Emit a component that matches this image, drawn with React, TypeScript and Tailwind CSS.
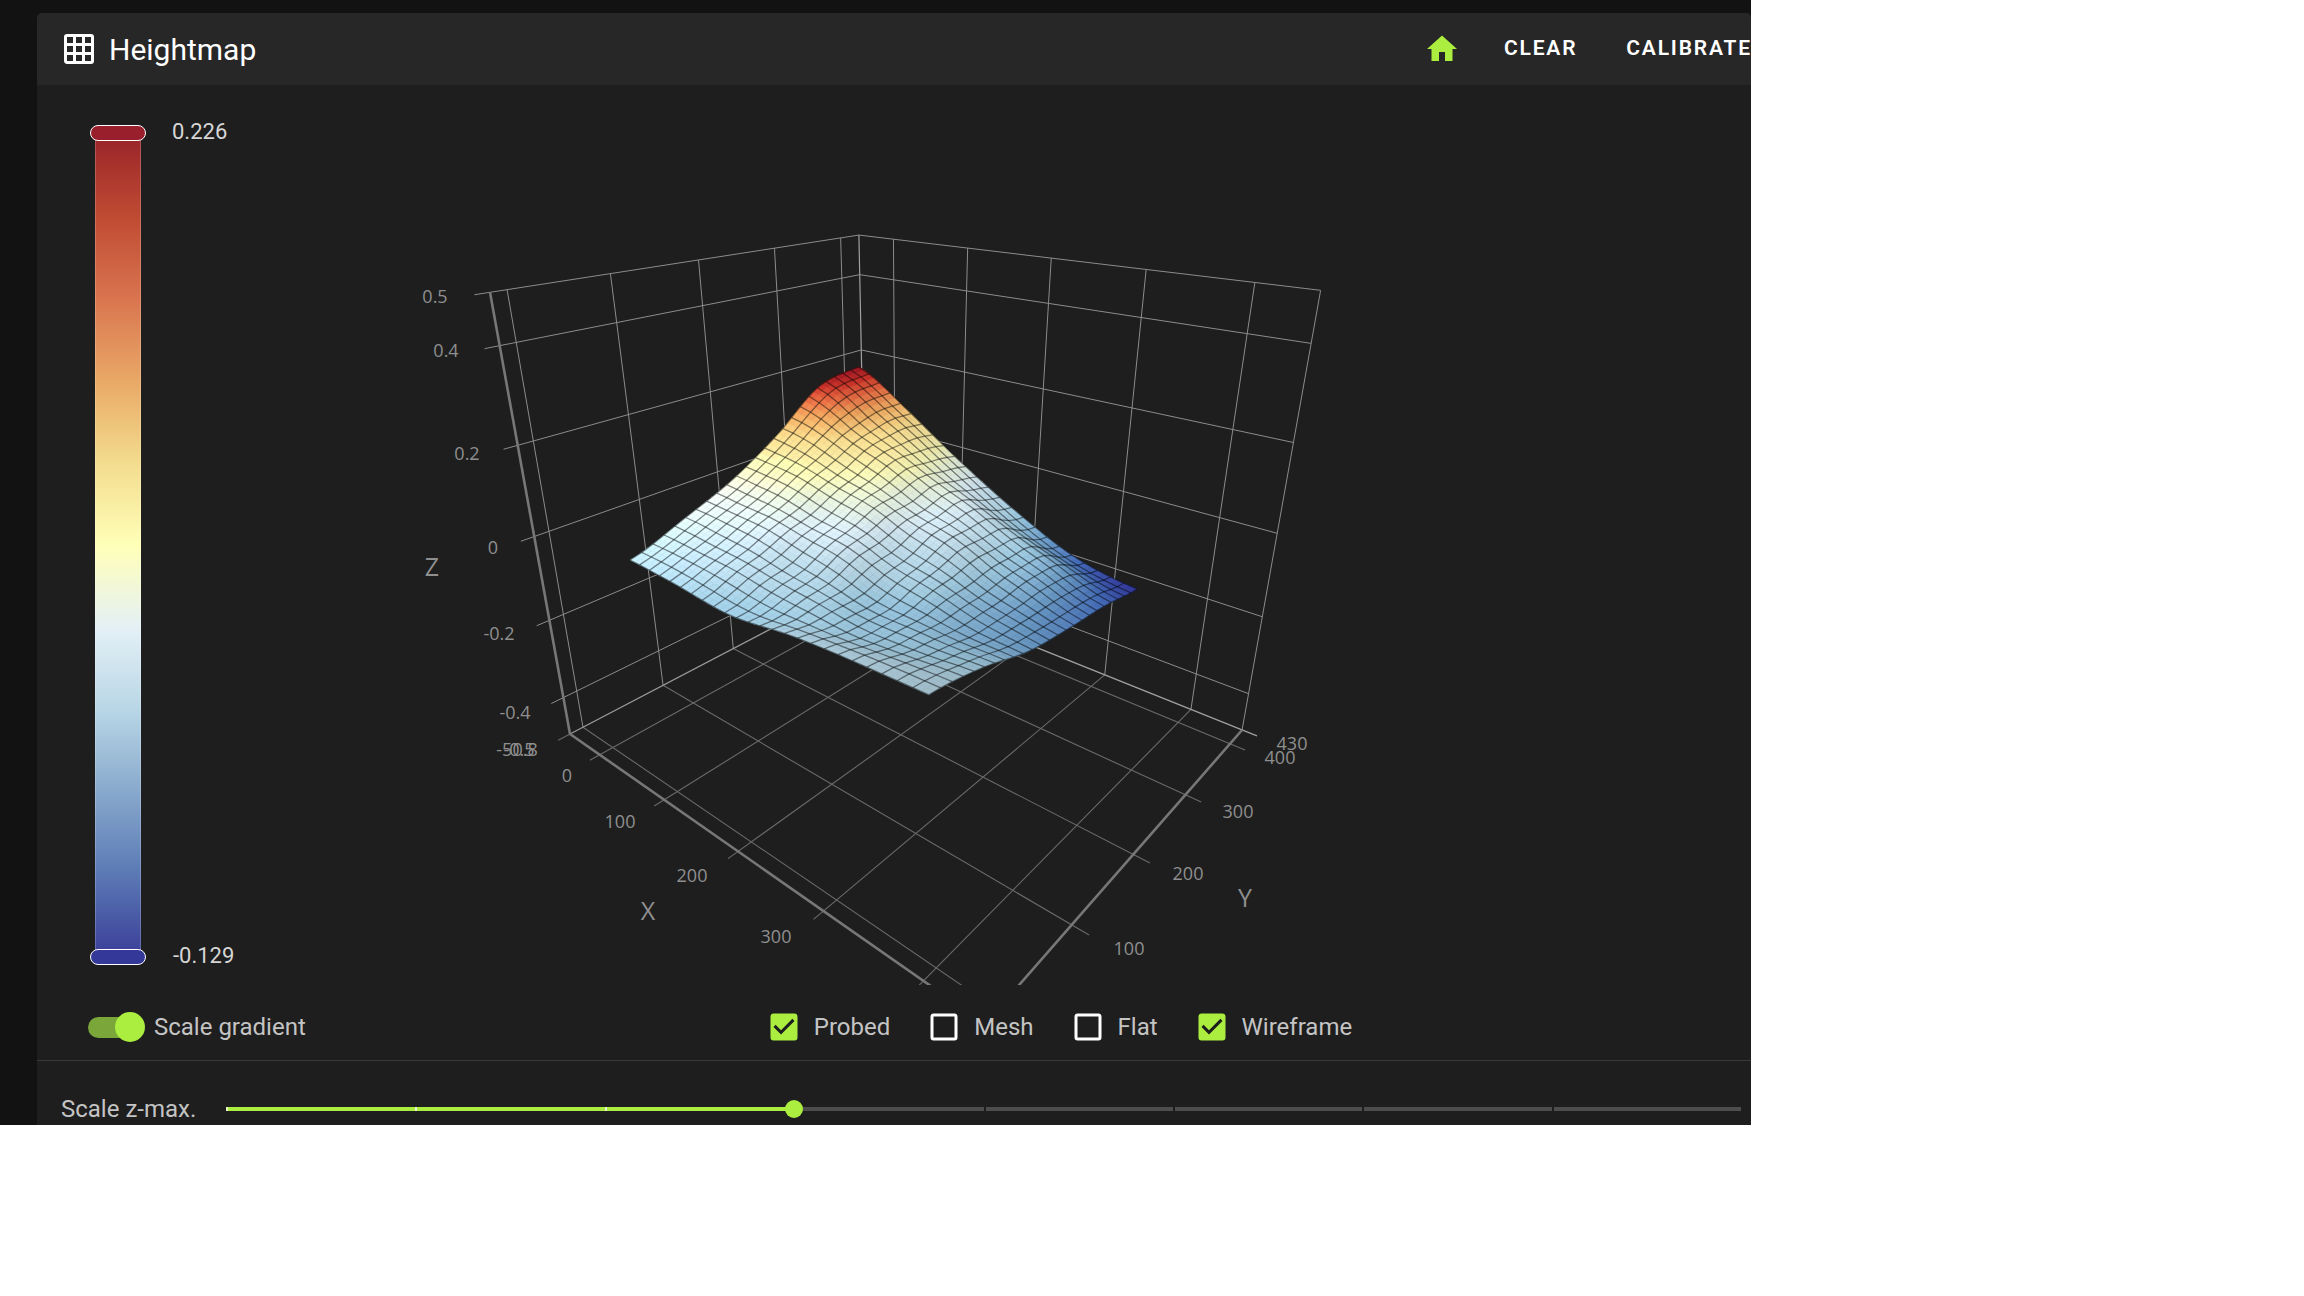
import React from 'react';

const G = -0.3105;
const H = 0.316;
const K = 0.1914;

// camera fitted on the plot's corners: u,v on the floor, t up the z axis
const project = (u: number, v: number, t: number): [number, number, number] => {
  const w = 1 + G * u + H * v - K * t;
  const x = 109.2 * u + 569.7 * v + 570 - K * 908 * t;
  const y = -28 * u + 28 * v + 734 - K * 2600 * t;
  return [x / w, y / w, w];
};

const xToU = (x: number) => (x + 50.8) / 505;
const yToV = (y: number) => (y + 15) / 445;
const zToT = (z: number) => z + 0.5;

const HEIGHTS = [
  [-0.02, -0.025, -0.035, -0.02, -0.01, -0.005],
  [0.02, 0.01, -0.01, -0.035, -0.04, -0.03],
  [0.065, 0.05, 0.025, -0.015, -0.05, -0.07],
  [0.13, 0.1, 0.055, 0.01, -0.045, -0.09],
  [0.21, 0.14, 0.075, 0.01, -0.05, -0.105],
  [0.226, 0.145, 0.05, -0.035, -0.1, -0.129],
];

const catmull = (p: number[], f: number) => {
  const n = p.length - 1;
  const a = Math.min(Math.floor(f * n), n - 1);
  const l = f * n - a;
  const p0 = p[Math.max(a - 1, 0)];
  const p1 = p[a];
  const p2 = p[a + 1];
  const p3 = p[Math.min(a + 2, n)];
  return 0.5 * (2 * p1 + (p2 - p0) * l + (2 * p0 - 5 * p1 + 4 * p2 - p3) * l * l + (3 * p1 - p0 - 3 * p2 + p3) * l * l * l);
};

const height = (s: number, r: number) => {
  const col = HEIGHTS.map((row) => catmull(row, s));
  const base = catmull(col, r);
  const edge = Math.sin(Math.PI * s) * Math.sin(Math.PI * r);
  return base + 0.0035 * edge * Math.sin(s * 23 + r * 9) + 0.003 * Math.sin(r * 31 - s * 7) * Math.sin(Math.PI * s);
};

const meshUV = (s: number, r: number): [number, number] => {
  const u = (1 - r) * ((1 - s) * 0.178 + s * 0.839) + r * ((1 - s) * 0.155 + s * 0.82);
  const v = (1 - r) * 0.0843 + r * ((1 - s) * 0.796 + s * 0.8176);
  return [u, v];
};

const meshPoint = (s: number, r: number) => {
  const [u, v] = meshUV(s, r);
  return project(u, v, zToT(height(s, r)));
};

const STOPS = [
  [49, 54, 149],
  [70, 110, 190],
  [116, 168, 215],
  [171, 217, 240],
  [225, 245, 255],
  [255, 255, 190],
  [254, 224, 144],
  [248, 176, 100],
  [238, 112, 70],
  [205, 52, 42],
  [150, 20, 35],
];

// height to colour stop, read off the surface (it doesn't follow the bar exactly)
const Z_MAP: [number, number][] = [
  [-0.129, 0],
  [-0.09, 1.5],
  [-0.05, 2.6],
  [-0.02, 3.3],
  [0.02, 3.9],
  [0.06, 4.5],
  [0.09, 5.2],
  [0.13, 6],
  [0.17, 7.3],
  [0.2, 8.5],
  [0.226, 9.99],
];

const stopOf = (z: number) => {
  if (z <= Z_MAP[0][0]) return 0;
  for (let i = 1; i < Z_MAP.length; i++) {
    const [z1, f1] = Z_MAP[i];
    const [z0, f0] = Z_MAP[i - 1];
    if (z <= z1) return f0 + ((f1 - f0) * (z - z0)) / (z1 - z0);
  }
  return 9.99;
};

const colorAt = (z: number, shade: number) => {
  const f = stopOf(z);
  const i = Math.floor(f);
  const l = f - i;
  const c = STOPS[i].map((a, k) => Math.round(Math.min(255, (a + (STOPS[i + 1][k] - a) * l) * shade)));
  return `rgb(${c[0]},${c[1]},${c[2]})`;
};

const seg = (a: number[], b: number[]) => ({ x1: a[0], y1: a[1], x2: b[0], y2: b[1] });

function Surface() {
  const N = 48;
  const cells: { w: number; pts: string; fill: string }[] = [];
  for (let i = 0; i < N; i++) {
    for (let j = 0; j < N; j++) {
      const s0 = i / N;
      const s1 = (i + 1) / N;
      const r0 = j / N;
      const r1 = (j + 1) / N;
      const a = meshPoint(s0, r0);
      const b = meshPoint(s1, r0);
      const c = meshPoint(s1, r1);
      const d = meshPoint(s0, r1);
      const z = height((s0 + s1) / 2, (r0 + r1) / 2);
      const dzs = (height(s1, r0) - height(s0, r0)) * N;
      const dzr = (height(s0, r1) - height(s0, r0)) * N;
      let shade = 1.08 + 0.3 * Math.min(0, dzs) - 0.2 * Math.max(0, -dzr);
      shade -= 0.26 * s0 * (1 - r0);
      if (z > 0.1) shade = Math.min(shade, 1);
      cells.push({
        w: a[2] + c[2],
        pts: [a, b, c, d].map((p) => `${p[0].toFixed(1)},${p[1].toFixed(1)}`).join(' '),
        fill: colorAt(z, Math.max(0.6, shade)),
      });
    }
  }
  cells.sort((p, q) => q.w - p.w);

  const W = 24;
  const wires: string[] = [];
  for (let i = 0; i <= W; i++) {
    const along: string[] = [];
    const across: string[] = [];
    for (let k = 0; k <= W; k++) {
      const p = meshPoint(i / W, k / W);
      const q = meshPoint(k / W, i / W);
      along.push(`${p[0].toFixed(1)},${p[1].toFixed(1)}`);
      across.push(`${q[0].toFixed(1)},${q[1].toFixed(1)}`);
    }
    wires.push(along.join(' '), across.join(' '));
  }

  return (
    <g>
      {cells.map((c, i) => (
        <polygon key={i} points={c.pts} fill={c.fill} stroke={c.fill} strokeWidth={0.7} />
      ))}
      {wires.map((pts, i) => (
        <polyline key={i} points={pts} fill="none" stroke="#000" strokeOpacity={0.45} strokeWidth={1.3} />
      ))}
    </g>
  );
}

const X_TICKS = [0, 100, 200, 300, 400];
const Y_TICKS = [0, 100, 200, 300, 400];
const Z_TICKS = [-0.4, -0.2, 0, 0.2, 0.4, 0.5];

const LABELS: [string, number, number][] = [
  ['0.5', 435, 296],
  ['0.4', 446, 350],
  ['0.2', 467, 453],
  ['0', 493, 547],
  ['-0.2', 499, 633],
  ['-0.4', 515, 712],
  ['-0.5', 519, 749],
  ['-50.8', 517, 749],
  ['0', 567, 775],
  ['100', 620, 821],
  ['200', 692, 875],
  ['300', 776, 936],
  ['430', 1292, 743],
  ['400', 1280, 757],
  ['300', 1238, 811],
  ['200', 1188, 873],
  ['100', 1129, 948],
];

function Plot() {
  const wall = { stroke: '#8c8c8c', strokeWidth: 1 };
  const floor = { stroke: '#6a6a6a', strokeWidth: 1.1 };
  return (
    <svg viewBox="300 85 1200 900" className="w-[1200px] h-[900px] shrink-0 [font-family:'Open_Sans',sans-serif]">
      {/* back walls */}
      {Y_TICKS.map((y) => (
        <line key={`wy${y}`} {...seg(project(0, yToV(y), 0), project(0, yToV(y), 1))} {...wall} />
      ))}
      {X_TICKS.map((x) => (
        <line key={`wx${x}`} {...seg(project(xToU(x), 1, 0), project(xToU(x), 1, 1))} {...wall} />
      ))}
      <line {...seg(project(1, 1, 0), project(1, 1, 1))} {...wall} />
      <line {...seg(project(0, 1, 0), project(0, 1, 1))} stroke="#a0a0a0" strokeWidth={1.2} />
      {Z_TICKS.map((z) => (
        <g key={`z${z}`}>
          <line {...seg(project(0, -0.03, zToT(z)), project(0, 1, zToT(z)))} {...wall} />
          <line {...seg(project(0, 1, zToT(z)), project(1, 1, zToT(z)))} {...wall} />
        </g>
      ))}
      {/* floor */}
      {X_TICKS.map((x) => (
        <line key={`fx${x}`} {...seg(project(xToU(x), -0.025, 0), project(xToU(x), 1, 0))} {...floor} />
      ))}
      {Y_TICKS.map((y) => (
        <line key={`fy${y}`} {...seg(project(0, yToV(y), 0), project(1.03, yToV(y), 0))} {...floor} />
      ))}
      <line {...seg(project(0, 0, 0), project(0, 1, 0))} stroke="#9a9a9a" strokeWidth={1.3} />
      <line {...seg(project(0, 1, 0), project(1.03, 1, 0))} stroke="#a0a0a0" strokeWidth={1.3} />
      <line {...seg(project(0, -0.03, 0), project(0, 0, 0))} {...floor} />
      {/* axes */}
      <line {...seg(project(0, 0, 0), project(0, 0, 1))} stroke="#777" strokeWidth={2.6} />
      <line {...seg(project(0, 0, 0), project(1, 0, 0))} stroke="#777" strokeWidth={2.6} />
      <line {...seg(project(1, 0, 0), project(1, 1, 0))} stroke="#777" strokeWidth={2.6} />
      <Surface />
      {LABELS.map(([text, x, y], i) => (
        <text key={i} x={x} y={y + 6.5} textAnchor="middle" fontSize={18} fill="#8f8f8f">
          {text}
        </text>
      ))}
      <text x={432} y={576} textAnchor="middle" fontSize={25} fill="#8f8f8f">Z</text>
      <text x={648} y={920} textAnchor="middle" fontSize={25} fill="#8f8f8f">X</text>
      <text x={1245} y={907} textAnchor="middle" fontSize={25} fill="#8f8f8f">Y</text>
    </svg>
  );
}

const MDI_HOME = 'M10,20V14H14V20H19V12H22L12,3L2,12H5V20H10Z';
const MDI_GRID =
  'M10,4V8H14V4H10M16,4V8H20V4H16M16,10V14H20V10H16M16,16V20H20V16H16M14,20V16H10V20H14M8,20V16H4V20H8M8,14V10H4V14H8M8,8V4H4V8H8M10,14H14V10H10V14M4,2H20A2,2 0 0,1 22,4V20A2,2 0 0,1 20,22H4C2.92,22 2,21.1 2,20V4A2,2 0 0,1 4,2Z';
const MDI_CHECKED =
  'M10,17L5,12L6.41,10.58L10,14.17L17.59,6.58L19,8M19,3H5C3.89,3 3,3.89 3,5V19A2,2 0 0,0 5,21H19A2,2 0 0,0 21,19V5C21,3.89 20.1,3 19,3Z';
const MDI_BLANK =
  'M19,3H5C3.89,3 3,3.89 3,5V19A2,2 0 0,0 5,21H19A2,2 0 0,0 21,19V5C21,3.89 20.1,3 19,3M19,5V19H5V5H19Z';

const CHECKS = [
  { label: 'Probed', on: true },
  { label: 'Mesh', on: false },
  { label: 'Flat', on: false },
  { label: 'Wireframe', on: true },
];

export default function App() {
  return (
    <div className="w-[1751px] h-[1125px] overflow-hidden bg-[#121212] pl-[37px] pt-[13px] [font-family:Roboto,sans-serif]">
      <div className="w-[1714px] h-[1112px] overflow-hidden rounded-t-[5px] bg-[#1e1e1e]">
        <header className="flex h-[72px] items-center bg-[#272727] pl-[24px]">
          <svg viewBox="0 0 24 24" className="h-9 w-9 fill-white shrink-0">
            <path d={MDI_GRID} />
          </svg>
          <h1 className="ml-[12px] text-[30px] font-normal text-white">Heightmap</h1>
          <div className="ml-auto flex w-[327px] shrink-0 items-center overflow-hidden">
            <svg viewBox="0 0 24 24" className="h-9 w-9 fill-[#abee3f] shrink-0">
              <path d={MDI_HOME} />
            </svg>
            <span className="ml-[44px] text-[21px] font-semibold tracking-[1.8px] text-white">CLEAR</span>
            <span className="ml-[49px] text-[21px] font-semibold tracking-[1.8px] text-white whitespace-nowrap">CALIBRATE</span>
          </div>
        </header>

        <div className="flex h-[900px] items-start">
          <div className="relative ml-[53px] mt-[40px] h-[840px] w-[56px] shrink-0">
            <div className="mx-auto mt-[8px] h-[825px] w-[46px] border-x border-white/20 bg-[linear-gradient(to_bottom,#982329,#bf4a32,#d9744f,#e9a866,#f3dc8e,#ffffb8,#e4f0f6,#b8d6e6,#87a8cc,#5a78b4,#3a3d98)]" />
            <div className="absolute left-0 top-0 h-[16px] w-[56px] rounded-[8px] border-[1.5px] border-white bg-[#9a1f2c]" />
            <div className="absolute bottom-0 left-0 h-[16px] w-[56px] rounded-[8px] border-[1.5px] border-white bg-[#333899]" />
          </div>
          <div className="ml-[26px] mt-[30px] flex h-[857px] w-[128px] shrink-0 flex-col justify-between text-[22px] text-[#d6d6d6]">
            <span>0.226</span>
            <span className="ml-[1px]">-0.129</span>
          </div>
          <Plot />
        </div>

        <div className="flex h-[75px] items-center pt-[9px]">
          <div className="relative ml-[51px] h-[30px] w-[57px] shrink-0">
            <div className="absolute left-0 top-[4.5px] h-[21px] w-[50px] rounded-full bg-[#7ba63a]" />
            <div className="absolute right-0 top-0 h-[30px] w-[30px] rounded-full bg-[#abee3f]" />
          </div>
          <span className="ml-[9px] text-[24px] text-[#c4c4c4]">Scale gradient</span>
          <div className="ml-[460px] flex items-center gap-[36px]">
            {CHECKS.map((c) => (
              <label key={c.label} className="flex items-center gap-[12px]">
                <svg viewBox="0 0 24 24" className={`h-9 w-9 shrink-0 ${c.on ? 'fill-[#abee3f]' : 'fill-white'}`}>
                  <path d={c.on ? MDI_CHECKED : MDI_BLANK} />
                </svg>
                <span className="text-[24px] text-[#c4c4c4]">{c.label}</span>
              </label>
            ))}
          </div>
        </div>

        <div className="flex items-center border-t border-[#3a3a3a] pl-[24px] pt-[30px]">
          <span className="w-[165px] shrink-0 text-[24px] text-[#c4c4c4]">Scale z-max.</span>
          <div className="relative flex w-[1515px] shrink-0 items-center">
            {[0, 1, 2, 3, 4, 5, 6, 7].map((i) => (
              <div
                key={i}
                className={
                  i < 3
                    ? 'h-[4px] flex-1 border-l-2 border-l-[#e8f5c8] bg-[#abee3f]'
                    : 'h-[4px] flex-1 border-l-2 border-l-[#1e1e1e] bg-[#4d4d4d]'
                }
              />
            ))}
            <div className="absolute left-[559px] top-1/2 h-[18px] w-[18px] -translate-y-1/2 rounded-full bg-[#abee3f]" />
          </div>
        </div>
      </div>
    </div>
  );
}
